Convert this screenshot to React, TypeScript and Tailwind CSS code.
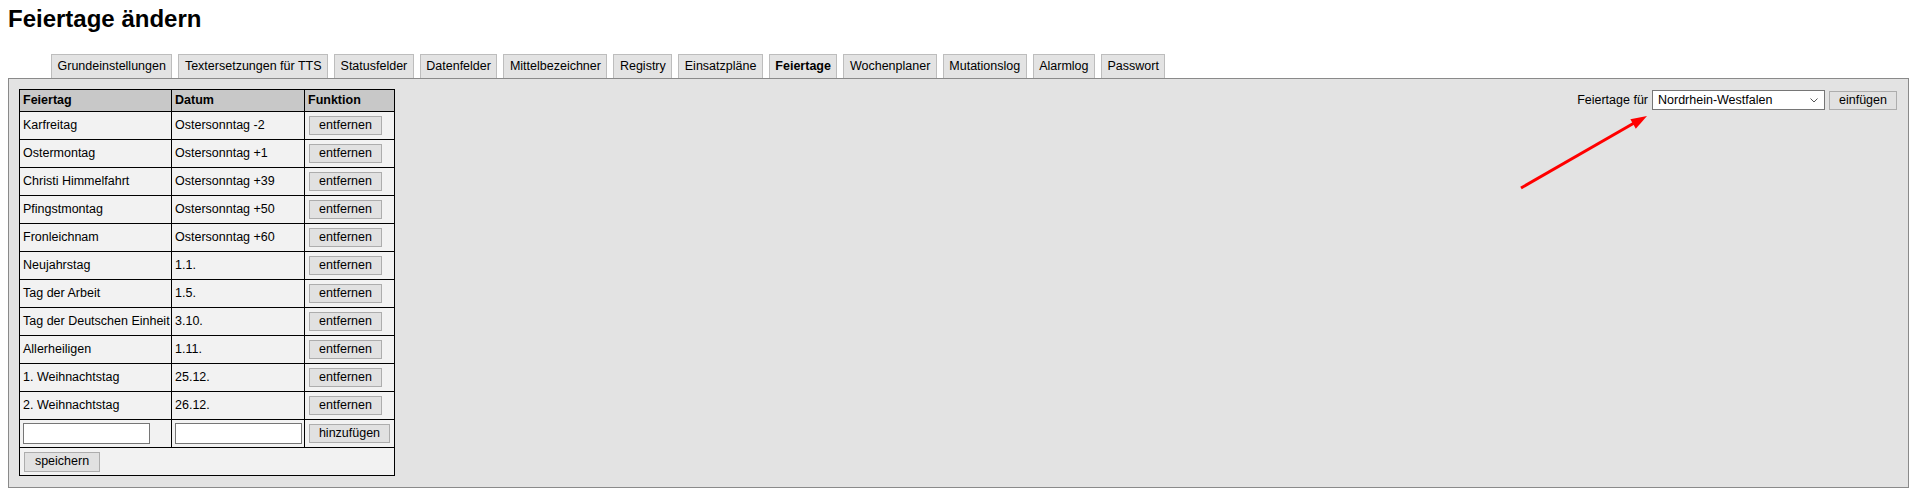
import React from "react"

const tabs = [
  "Grundeinstellungen",
  "Textersetzungen für TTS",
  "Statusfelder",
  "Datenfelder",
  "Mittelbezeichner",
  "Registry",
  "Einsatzpläne",
  "Feiertage",
  "Wochenplaner",
  "Mutationslog",
  "Alarmlog",
  "Passwort",
]

const holidays = [
  ["Karfreitag", "Ostersonntag -2"],
  ["Ostermontag", "Ostersonntag +1"],
  ["Christi Himmelfahrt", "Ostersonntag +39"],
  ["Pfingstmontag", "Ostersonntag +50"],
  ["Fronleichnam", "Ostersonntag +60"],
  ["Neujahrstag", "1.1."],
  ["Tag der Arbeit", "1.5."],
  ["Tag der Deutschen Einheit", "3.10."],
  ["Allerheiligen", "1.11."],
  ["1. Weihnachtstag", "25.12."],
  ["2. Weihnachtstag", "26.12."],
]

const btn =
  "h-[19px] border border-[#adadad] bg-[#e1e1e1] text-[12.5px] leading-none text-black"

export default function App() {
  return (
    <div className="relative min-h-[500px] bg-white px-[8px] text-black font-['Liberation_Sans',Arial,sans-serif]">
      <h1 className="pt-[5px] text-[24px] font-bold leading-[28px]">Feiertage ändern</h1>

      {/* Tabs */}
      <div className="mt-[21px] ml-[43px] flex gap-[6px]">
        {tabs.map((t) => (
          <div
            key={t}
            className={
              "border border-b-0 border-[#bdbdbd] bg-[#e3e3e3] px-[5.5px] pt-1 pb-[4px] text-[12.5px] leading-[15px] whitespace-nowrap " +
              (t === "Feiertage" ? "font-bold" : "")
            }
          >
            {t}
          </div>
        ))}
      </div>

      {/* Panel */}
      <div className="flex items-start border border-[#8a8a8a] bg-[#e3e3e3] px-[10px] pt-[10px] pb-[11px] text-[12.5px]">
        <div className="grid grid-cols-[151px_132px_89px] gap-px border border-black bg-black">
          <div className="flex h-[21px] items-center bg-[#c8c8c8] pl-[3px] font-bold">Feiertag</div>
          <div className="flex h-[21px] items-center bg-[#c8c8c8] pl-[3px] font-bold">Datum</div>
          <div className="flex h-[21px] items-center bg-[#c8c8c8] pl-[3px] font-bold">Funktion</div>

          {holidays.map(([name, date]) => (
            <React.Fragment key={name}>
              <div className="flex h-[27px] items-center bg-[#f2f2f2] pl-[3px] whitespace-nowrap">{name}</div>
              <div className="flex h-[27px] items-center bg-[#f2f2f2] pl-[3px]">{date}</div>
              <div className="flex h-[27px] items-center bg-[#f2f2f2] pl-[4px]">
                <button className={btn + " w-[73px]"}>entfernen</button>
              </div>
            </React.Fragment>
          ))}

          <div className="flex h-[27px] items-center bg-[#f2f2f2] pl-[3px]">
            <input className="h-[21px] w-[127px] border border-[#767676] bg-white" />
          </div>
          <div className="flex h-[27px] items-center bg-[#f2f2f2] pl-[3px]">
            <input className="h-[21px] w-[127px] border border-[#767676] bg-white" />
          </div>
          <div className="flex h-[27px] items-center bg-[#f2f2f2] pl-[4px]">
            <button className={btn + " w-[81px]"}>hinzufügen</button>
          </div>

          <div className="col-span-3 flex h-[27px] items-center bg-[#f2f2f2] pl-[4px]">
            <button className={btn + " h-[20px] w-[76px]"}>speichern</button>
          </div>
        </div>

        <div className="ml-auto mt-px mr-px flex items-center">
          <span className="mr-[4px]">Feiertage für</span>
          <div className="flex h-[20px] w-[173px] items-center justify-between border border-[#767676] bg-white pl-[5px] pr-[6px]">
            <span>Nordrhein-Westfalen</span>
            <svg width="8" height="5" viewBox="0 0 8 5" className="mt-px">
              <path d="M0.5 0.5 L4 4 L7.5 0.5" fill="none" stroke="#555" strokeWidth="1" />
            </svg>
          </div>
          <button className={btn + " ml-[4px] w-[68px]"}>einfügen</button>
        </div>
      </div>

      {/* Annotation arrow */}
      <svg className="pointer-events-none absolute left-0 top-0" width="1917" height="500">
        <line x1="1521" y1="188" x2="1635" y2="122.5" stroke="#ff0000" strokeWidth="3" />
        <polygon points="1647,116 1635.8,128.8 1630.4,119.2" fill="#ff0000" />
      </svg>
    </div>
  )
}
